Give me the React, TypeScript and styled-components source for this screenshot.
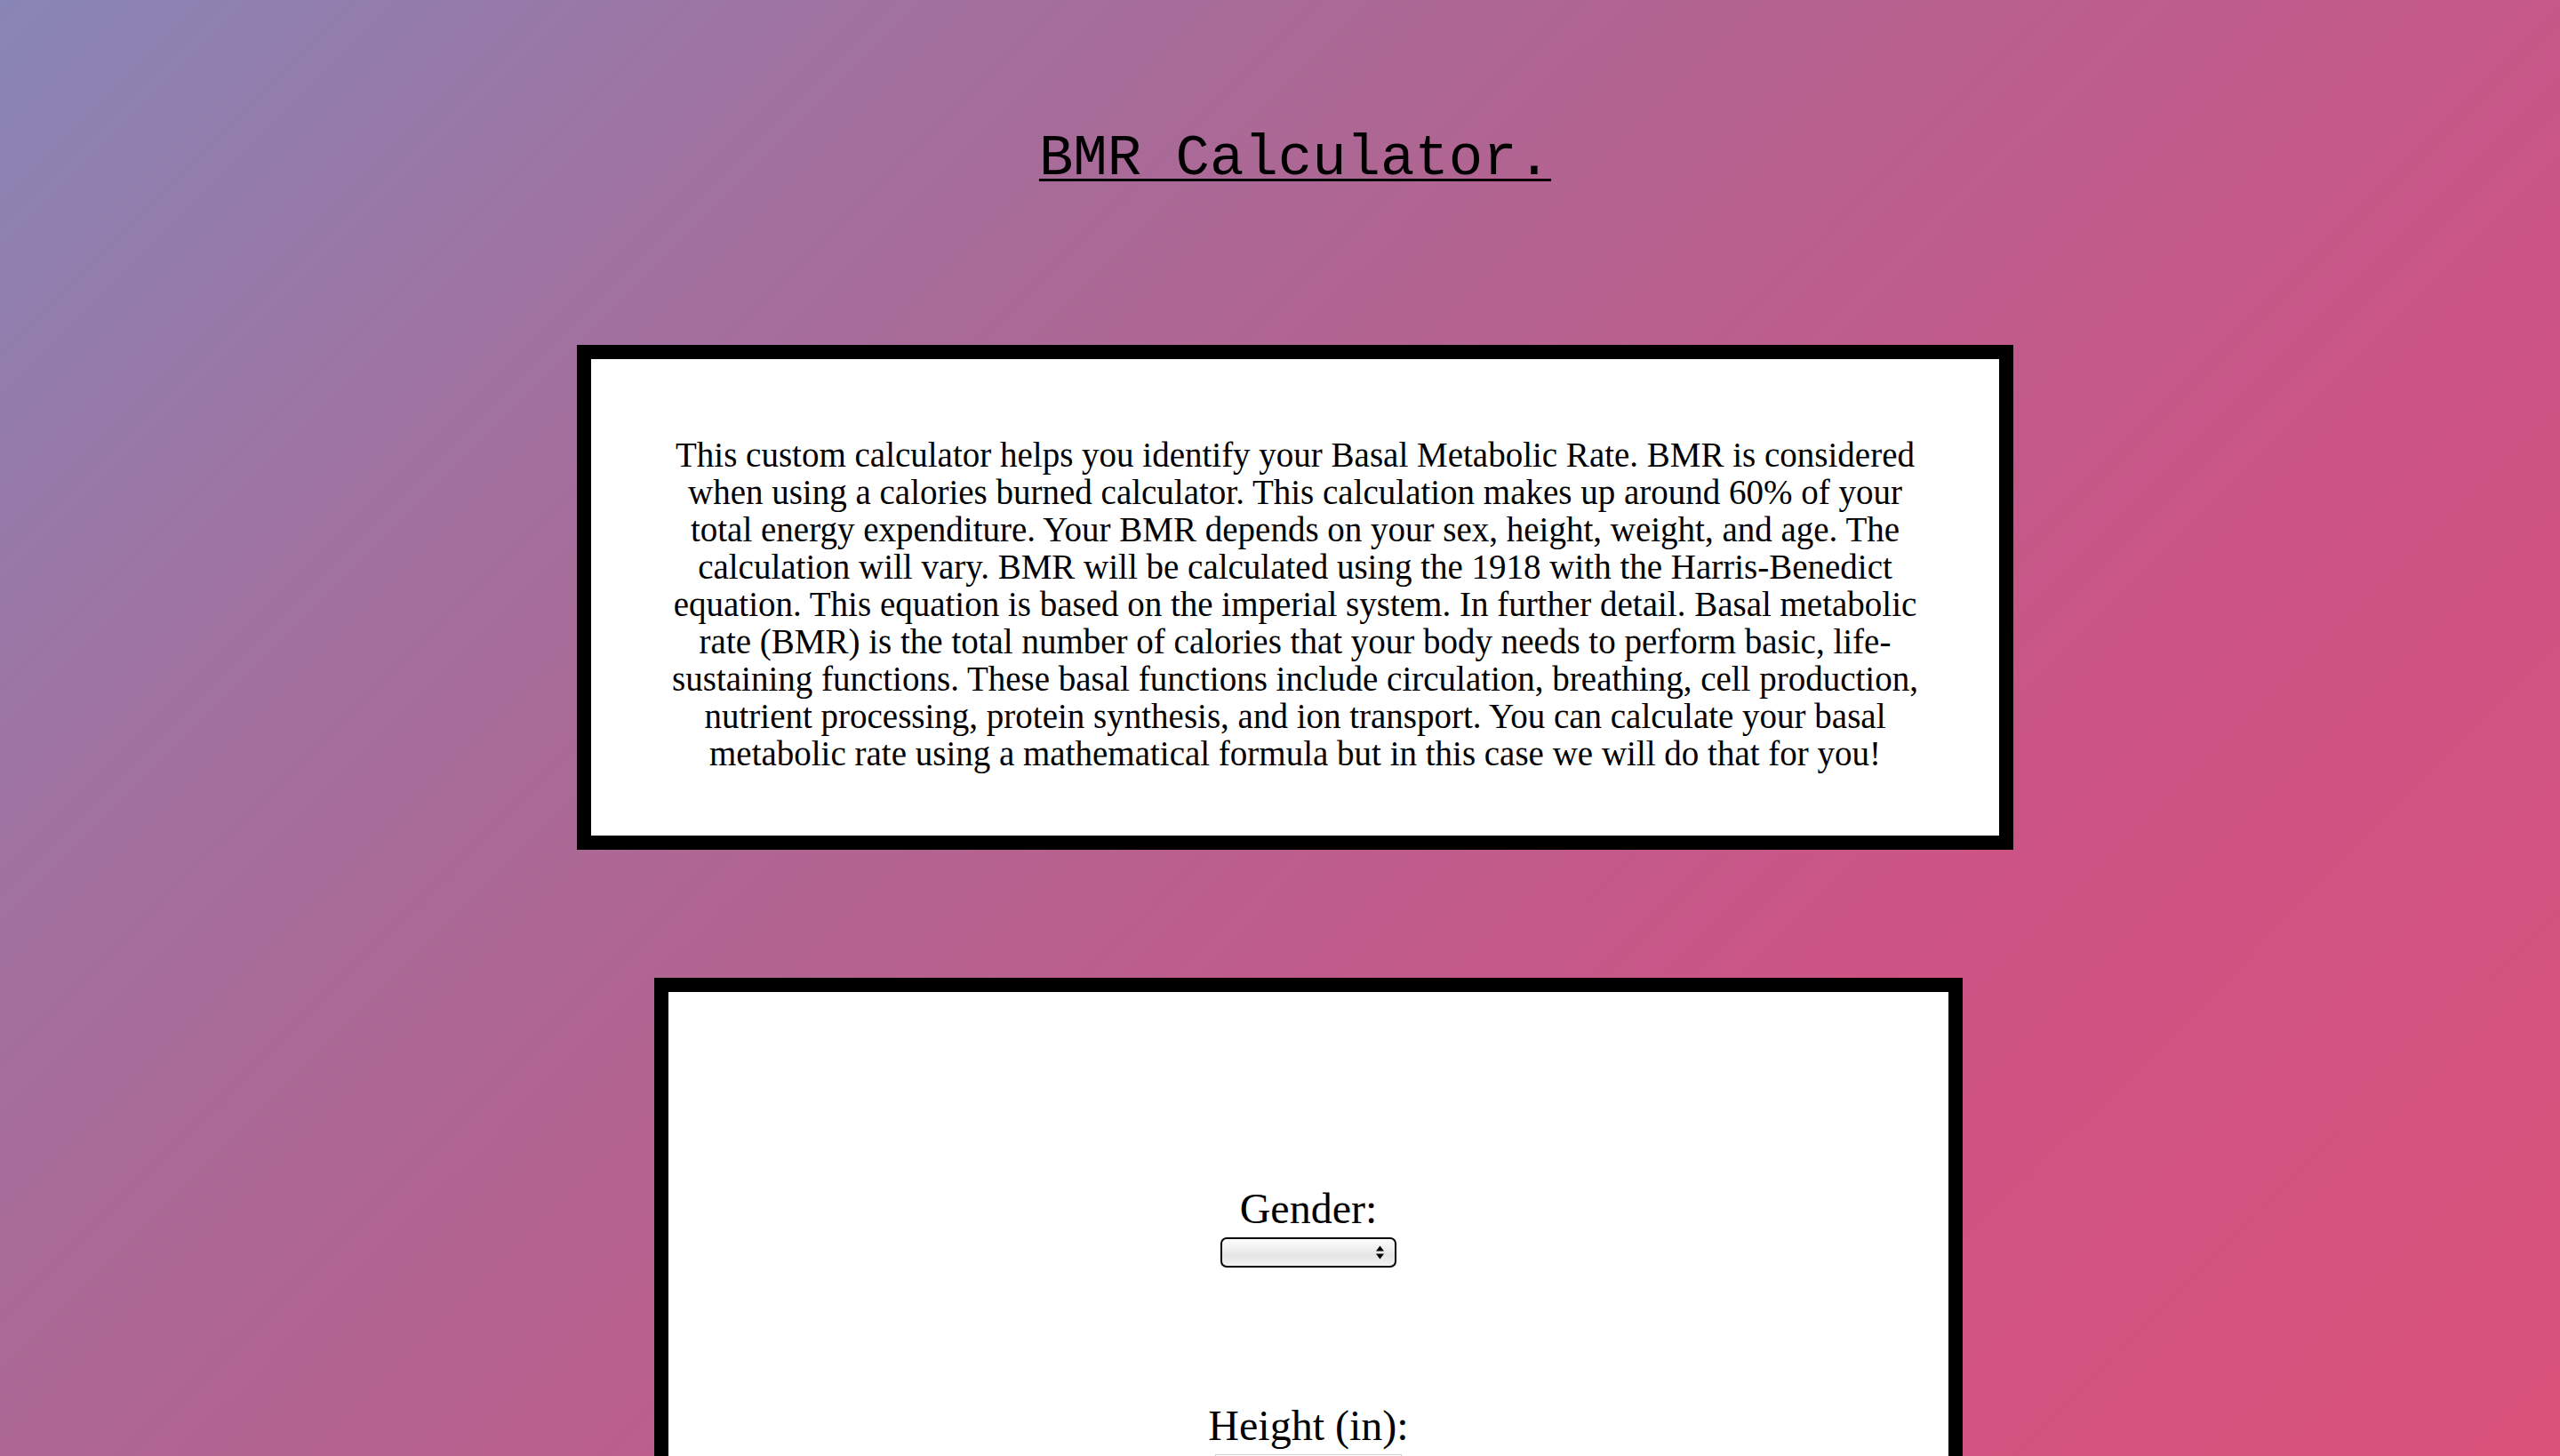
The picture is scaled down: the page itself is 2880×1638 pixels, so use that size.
import React from "react";
import styled, { createGlobalStyle } from "styled-components";

const GlobalStyle = createGlobalStyle`
  html, body {
    margin: 0;
    padding: 0;
  }
  body {
    font-family: "Liberation Serif", "Times New Roman", serif;
    color: #000;
    min-height: 100vh;
    background: linear-gradient(135deg, #8886b6 0%, #a1719f 22.6%, #b06592 40%, #cc5485 71%, #d9527a 100%) fixed;
  }
`;

const Page = styled.main`
  display: flex;
  flex-direction: column;
  align-items: center;
  padding: 143px 0 200px 34px;
`;

const Title = styled.h1`
  margin: 0;
  font-family: "Liberation Mono", "Courier New", monospace;
  font-size: 64px;
  font-weight: normal;
  line-height: 72px;
  text-decoration: underline;
  text-decoration-thickness: 3px;
  text-underline-offset: 5px;
`;

const Card = styled.section<{ $width: number; $shift?: number; $top: number }>`
  box-sizing: border-box;
  width: ${(p) => p.$width}px;
  margin-top: ${(p) => p.$top}px;
  margin-left: ${(p) => p.$shift ?? 0}px;
  background: #fff;
  border: 16px solid #000;
`;

const Intro = styled.p`
  margin: 0;
  padding: 87px 0 71px;
  text-align: center;
  font-size: 39px;
  line-height: 42px;
  white-space: nowrap;
`;

const Line = styled.span`
  display: block;
`;

const Form = styled.form`
  display: flex;
  flex-direction: column;
  align-items: center;
  gap: 150px;
  padding: 216px 0 200px;
`;

const Field = styled.div`
  display: flex;
  flex-direction: column;
  align-items: center;
  gap: 5px;
`;

const Label = styled.label`
  font-size: 48px;
  line-height: 55px;
`;

const SelectWrap = styled.div`
  position: relative;
  width: 198px;
  height: 34px;
`;

const Select = styled.select`
  appearance: none;
  -webkit-appearance: none;
  box-sizing: border-box;
  width: 100%;
  height: 100%;
  border: 2px solid #000;
  border-radius: 7px;
  background: linear-gradient(to bottom, #fdfdfd 0%, #ececec 45%, #e4e4e4 60%, #f4f4f4 100%);
  font-family: "Liberation Sans", Arial, sans-serif;
  font-size: 18px;
  padding: 0 30px 0 10px;
  color: #000;
`;

const Arrows = styled.svg`
  position: absolute;
  right: 13px;
  top: 9px;
  width: 11px;
  height: 16px;
  pointer-events: none;
`;

const TextInput = styled.input`
  box-sizing: border-box;
  width: 210px;
  height: 40px;
  border: 1px solid #cfcfcf;
  background: #fff;
  font-size: 18px;
  font-family: "Liberation Sans", Arial, sans-serif;
`;

const Button = styled.button`
  font-family: "Liberation Serif", serif;
  font-size: 32px;
  padding: 8px 24px;
  border: 2px solid #000;
  background: #fff;
  cursor: pointer;
`;

const lines = [
  "This custom calculator helps you identify your Basal Metabolic Rate. BMR is considered",
  "when using a calories burned calculator. This calculation makes up around 60% of your",
  "total energy expenditure. Your BMR depends on your sex, height, weight, and age. The",
  "calculation will vary. BMR will be calculated using the 1918 with the Harris-Benedict",
  "equation. This equation is based on the imperial system. In further detail. Basal metabolic",
  "rate (BMR) is the total number of calories that your body needs to perform basic, life-",
  "sustaining functions. These basal functions include circulation, breathing, cell production,",
  "nutrient processing, protein synthesis, and ion transport. You can calculate your basal",
  "metabolic rate using a mathematical formula but in this case we will do that for you!",
];

export default function App() {
  return (
    <>
      <GlobalStyle />
      <Page>
        <Title>BMR Calculator.</Title>
        <Card $width={1616} $top={173}>
          <Intro>
            {lines.map((l) => (
              <Line key={l}>{l}</Line>
            ))}
          </Intro>
        </Card>
        <Card $width={1472} $shift={30} $top={144}>
          <Form onSubmit={(e) => e.preventDefault()}>
            <Field>
              <Label htmlFor="gender">Gender:</Label>
              <SelectWrap>
                <Select id="gender" defaultValue="">
                  <option value=""></option>
                  <option value="male">Male</option>
                  <option value="female">Female</option>
                </Select>
                <Arrows viewBox="0 0 11 16">
                  <path d="M5.5 0.5 L10 6.5 L1 6.5 Z" fill="#000" />
                  <path d="M5.5 15.5 L10 9.5 L1 9.5 Z" fill="#000" />
                </Arrows>
              </SelectWrap>
            </Field>
            <Field>
              <Label htmlFor="height">Height (in):</Label>
              <TextInput id="height" type="text" />
            </Field>
            <Field>
              <Label htmlFor="weight">Weight (lbs):</Label>
              <TextInput id="weight" type="text" />
            </Field>
            <Field>
              <Label htmlFor="age">Age:</Label>
              <TextInput id="age" type="text" />
            </Field>
            <Button type="submit">Calculate</Button>
          </Form>
        </Card>
      </Page>
    </>
  );
}
